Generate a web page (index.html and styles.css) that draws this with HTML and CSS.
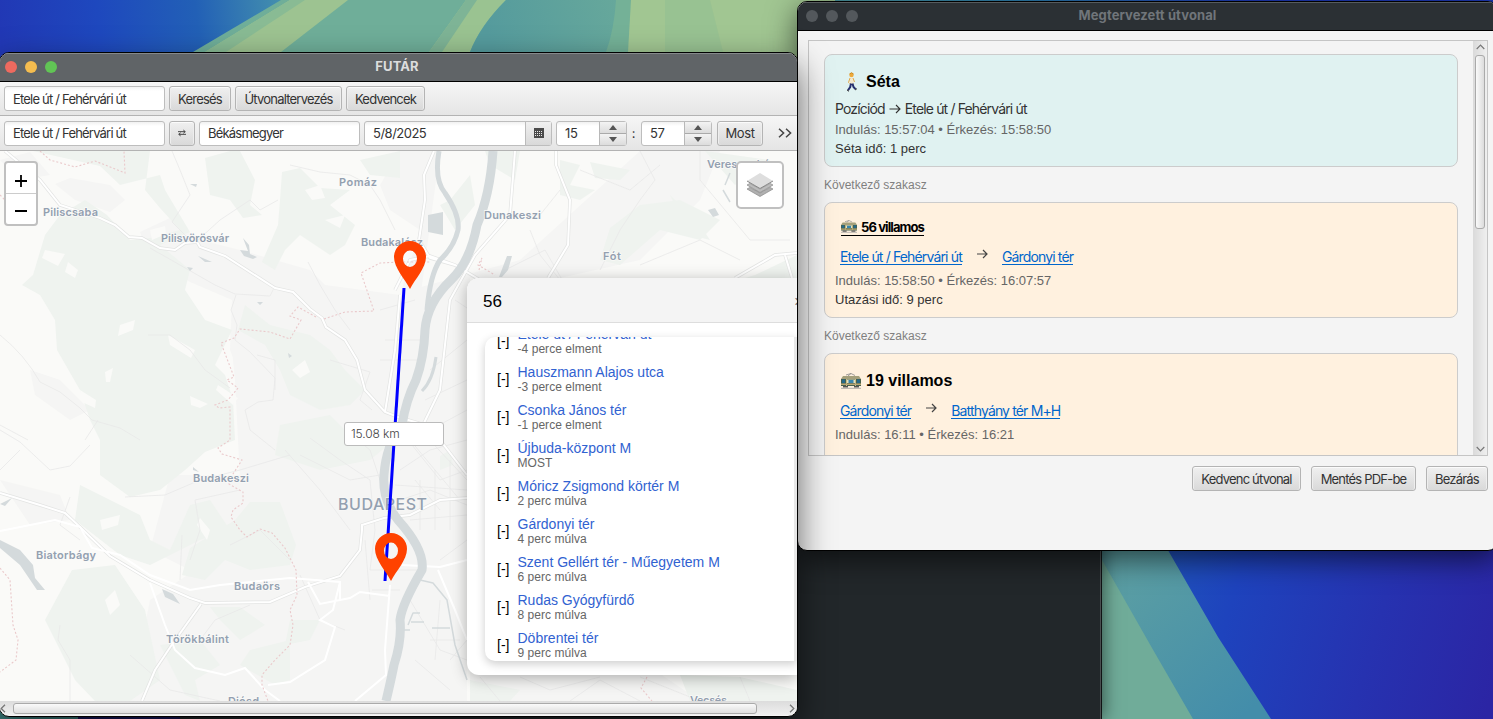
FILE: index.html
```html
<!DOCTYPE html>
<html lang="hu">
<head>
<meta charset="utf-8">
<title>FUTÁR</title>
<link rel="stylesheet" href="styles.css">
</head>
<body>
<div class="desktop">
  <svg class="wallpaper" viewBox="0 0 1493 719" width="1493" height="719">
    <defs>
      <linearGradient id="sky" x1="0" x2="280" y1="30" y2="0" gradientUnits="userSpaceOnUse"><stop offset="0" stop-color="#2138b5"/><stop offset=".35" stop-color="#1e48be"/><stop offset=".7" stop-color="#2260b6"/><stop offset="1" stop-color="#438fae"/></linearGradient>
      <linearGradient id="sea" x1="490" x2="630" y1="40" y2="0" gradientUnits="userSpaceOnUse"><stop offset="0" stop-color="#559b9d"/><stop offset="1" stop-color="#68a99b"/></linearGradient>
      <linearGradient id="deep" x1="1140" x2="1493" y1="590" y2="690" gradientUnits="userSpaceOnUse"><stop offset="0" stop-color="#2055bb"/><stop offset=".25" stop-color="#1e43bd"/><stop offset=".65" stop-color="#2632b0"/><stop offset="1" stop-color="#2b25a4"/></linearGradient>
      <linearGradient id="teal" x1="1110" x2="1240" y1="570" y2="719" gradientUnits="userSpaceOnUse"><stop offset="0" stop-color="#5c9fa3"/><stop offset="1" stop-color="#438daa"/></linearGradient>
      <linearGradient id="edge" x1="800" x2="1250" y1="0" y2="0" gradientUnits="userSpaceOnUse"><stop offset="0" stop-color="#519c9e"/><stop offset=".5" stop-color="#2c7dad"/><stop offset="1" stop-color="#1d39b6"/></linearGradient>
    </defs>
    <rect width="800" height="60" fill="url(#sky)"/>
    <path d="M193 52L281 0H800V60H180Z" fill="#6fae99"/>
    <path d="M205 52L290 0H348L281 52Z" fill="#9dc391"/>
    <path d="M205 52L290 0H305L226 52Z" fill="#89bb94"/>
    <path d="M429 52L466 0H506Q480 26 470 52Z" fill="#9ac391"/>
    <path d="M429 52L466 0H477L442 52Z" fill="#7eb496"/>
    <path d="M470 52Q480 26 506 0H640V52Z" fill="url(#sea)"/>
    <path d="M606 52Q614 30 616 0H634V52Z" fill="#74b197"/>
    <path d="M628 52L631 0H836V60H628Z" fill="#a1c692"/>
    <path d="M665 52V0H710L723 52Z" fill="#8fbe92" opacity=".5"/>
    <rect x="835" width="658" height="3" fill="url(#edge)"/>
    <rect x="1102" y="545" width="391" height="174" fill="url(#deep)"/>
    <path d="M1102 545H1165L1218 637L1271 719H1102Z" fill="url(#teal)"/>
    <path d="M1102 560L1152 648L1193 719H1102Z" fill="#70ac99"/>
    <rect y="700" width="78" height="19" fill="#3e8584"/>
    <rect x="78" y="700" width="102" height="19" fill="#171562"/>
  </svg>

  <div class="terminal"></div>

  <section class="window main-window">
    <header class="titlebar titlebar-active">
      <span class="light red"></span><span class="light amber"></span><span class="light green"></span>
      <h1 class="title">FUTÁR</h1>
    </header>
    <div class="toolbar">
      <div class="field">Etele út / Fehérvári út</div>
      <button class="btn w62">Keresés</button>
      <button class="btn w107">Útvonaltervezés</button>
      <button class="btn w79">Kedvencek</button>
    </div>
    <div class="toolbar toolbar-route">
      <div class="field">Etele út / Fehérvári út</div>
      <button class="btn swap"><svg width="8" height="8" viewBox="0 0 9 8"><path d="M0 2.500H8M6 .7L8.200 2.500L6 4.300M9 5.500H1M3 3.700L.8 5.500L3 7.300" fill="none" stroke="#444" stroke-width="1.100"/></svg></button>
      <div class="field">Békásmegyer</div>
      <div class="field date"><span>5/8/2025</span><span class="date-btn"><svg width="10" height="10" viewBox="0 0 10 10"><path d="M0 0H10V10H0Z" fill="#4a4a4a"/><path d="M1 3.500H9M1 5.500H9M1 7.500H9" stroke="#e8e8e8" stroke-width="1" stroke-dasharray="1 1"/></svg></span></div>
      <div class="spinner"><span>15</span><div class="steps"><i class="up"></i><i class="down"></i></div></div>
      <span class="colon">:</span>
      <div class="spinner"><span>57</span><div class="steps"><i class="up"></i><i class="down"></i></div></div>
      <button class="btn most">Most</button>
      <svg class="more" width="14" height="10" viewBox="0 0 14 10"><path d="M1 .8L5.600 5L1 9.200M8 .8L12.600 5L8 9.200" fill="none" stroke="#444" stroke-width="1.500"/></svg>
    </div>

    <div class="map">
      <svg class="tiles" viewBox="0 151 797 550" width="797" height="550">
        <rect y="151" width="797" height="550" fill="#fafaf8"/>
        <g fill="#f5f5f4">
          <path d="M55 184L75 200L110 212L125 200L110 185L70 178ZM140 232L170 218L200 240L240 250L310 270L325 285L400 295L420 230L390 210L380 185L400 151H440L420 300L410 430L360 440L250 400L230 350L232 300L190 282L150 258Z"/>
          <path d="M230 330L300 350L350 400L400 390L467 380V701H130L150 600L210 560L280 530L240 480L235 380Z"/>
          <path d="M410 290L520 260L640 151H720L700 200L640 260L560 278H470V520L400 500ZM30 370L60 380L90 410L70 420L35 395ZM120 320L170 300L180 330L140 340ZM0 160L30 152L50 175L20 180Z"/>
          <path d="M470 660H640L700 701H470ZM170 475L270 475L290 520L250 560L190 570L150 550ZM0 480L60 495L70 520L30 525Z"/>
        </g>
        <g fill="#eff3ef">
          <path d="M33 151H150L145 190L160 208L180 230L150 238L130 240L107 215L85 200L60 215L45 235L33 275L22 285L40 295L55 320L57 350L80 390L90 420L100 440V475L130 497L160 490L185 470L205 452L235 440L233 400L225 375L215 365L232 330L205 320L185 290L190 270L160 245L190 232L165 190L160 175L120 185L100 166Z"/>
          <path d="M205 158L230 151H240L255 180L250 205L262 215L243 218L230 200L210 195Z"/>
          <path d="M282 172L300 168L320 188L350 190L330 205L355 225L345 245L330 255L300 235L285 250L275 270L262 262L278 225L280 200Z"/>
          <path d="M360 160L400 151V178L370 175Z"/>
          <path d="M245 305L270 325L310 335L330 350L345 370L365 390L350 405L320 410L290 395L280 370L265 345L238 330Z"/>
          <path d="M280 425L330 415L350 435H400L370 460L320 470L275 455Z"/>
          <path d="M80 485L140 515L150 540L170 550L190 505L210 500L230 530L200 540L150 565L120 555L75 520Z"/>
          <path d="M190 548L235 520L250 502H280L296 545L290 565L250 570L225 560L205 580L182 575Z"/>
          <path d="M72 570L115 565L145 610L160 680L130 701H95L75 680L45 620Z"/>
          <path d="M160 645L200 640L220 665L195 680L200 701L185 695L175 675Z"/>
          <path d="M210 607H240L265 625L240 640L220 620ZM290 620H320L310 640L285 645ZM250 650L290 640V680L275 685L240 665Z"/>
          <path d="M485 151H520L515 180L490 165ZM560 160L580 165L570 185L595 190L580 200L560 195ZM610 228L640 205L680 200L720 220L700 240L660 230L620 265L600 260Z"/>
          <path d="M450 200L470 175L475 205L455 230L440 205ZM590 162L630 170L620 180L595 178ZM670 195L700 225L710 240L690 235ZM755 275L797 255V278H745ZM705 151L770 160L735 185Z"/>
          <path d="M440 456L450 450L453 465L440 470ZM470 680L520 690L510 701H470ZM680 675L740 677L797 690V701H690Z"/>
        </g>
        <g fill="#fafaf8">
          <path d="M68 262L78 270L75 278L65 272ZM45 250L65 254L58 266L42 258ZM120 325L135 320L133 330L118 336ZM105 372L113 368L110 382L106 382ZM80 390L96 400L95 408L82 402ZM218 385L238 398L233 405L216 390ZM168 335L195 350L191 358L170 345ZM190 396L208 404L200 408L191 405ZM150 230L165 226L166 234L152 240Z"/>
          <path d="M292 370L305 360L310 372L300 378ZM305 190L320 185L325 198L312 200ZM325 220L345 215L340 228ZM100 520L120 515L118 525L102 530ZM200 518L210 530L207 540L197 525ZM105 600L115 590L120 605L110 615Z"/>
        </g>
        <g fill="none" stroke="#e9e9e8" stroke-width=".8">
          <path d="M0 335Q25 355 40 382L60 392L80 408L92 420L120 428L140 440M172 151L180 170L190 195L172 222L190 240M0 425L28 440M85 440L98 420M290 165L320 172L350 175L370 185L380 200L395 230M278 200L260 210L250 200L220 220L198 240M150 248L180 265L215 285L235 294L270 296L275 286M236 295L231 310L237 325L235 340L250 352L275 378L273 400L258 402L245 410L250 430L275 450M257 355L275 360V390M308 262L320 285L335 310L350 330M148 335H170L190 350L205 370L230 388M330 360L370 372L360 400L372 410"/>
          <path d="M0 430L20 442L50 470L70 466L90 445M125 497L165 495L200 480L240 470L290 455M70 497L60 525L80 540M190 560L200 530L195 500L240 490M180 580L182 535M300 455L350 480L380 475M60 625L58 640L70 660V701M200 640L215 620L250 605M310 438L340 460L370 480L375 530L370 570M285 450L320 490L350 530M130 655L170 690L220 701M230 545L260 530L290 560M300 575L320 620L345 630"/>
          <path d="M640 151L655 180L640 200M580 170L630 190L660 165M600 270L620 230L640 200M505 270L545 250L568 290M455 300L500 330L540 278M700 151V180L750 240H790M560 280L540 255L530 230M640 265L700 240L740 260M495 215L540 215L560 190M380 310L415 300M385 340H425M380 360H420M430 370L467 340M425 400L467 380M430 430L467 410"/>
          <path d="M400 470L430 450L467 440M395 485L467 490M400 500L430 490L467 505M410 520L467 515M370 570H420M372 590H400M365 540L370 600M420 480V530M435 470V530M450 460V530M410 600L440 650L467 660M430 640H460M440 600L435 660M415 660L450 690M400 430L440 480L467 470M345 430L370 450L380 480M410 440L460 500M425 435L467 480M415 480L440 510"/>
          <path d="M480 677L500 701M520 677L550 690L600 677M570 701L600 680L640 701M640 677L700 701M740 677L750 701M440 560L467 540M450 660L467 640M0 470L20 450"/>
        </g>
        <g fill="none" stroke="#e3e4e3" stroke-width="3.400">
          <path id="r1" d="M5 151L40 180L60 205L100 218L115 225L129 237L142 238L160 248L175 250L185 243L197 242L200 247L225 256L275 288L293 292L310 309L322 318L326 327L345 340L357 360L365 390L385 412L398 417L425 425L440 440L467 475"/>
          <path id="r2" d="M0 493L40 505L65 513L80 527L110 556L150 580L190 598L205 603L270 602L305 587L340 576L360 550L362 530L362 525L384 518L410 515L440 500L467 498"/>
          <path id="r3" d="M201 604L171 646L155 670L142 701"/>
          <path id="r4" d="M434 151L424 175L425 200L419 240L430 258L455 265L480 280M400 295L395 350L385 412M455 265L430 256L410 260L395 290"/>
          <path id="r5" d="M556 151V165L570 200L568 245L548 278M515 151L510 215L475 255L450 300L440 390L423 425M797 253L775 255L735 278M785 255L792 278"/>
        </g>
        <g fill="none" stroke="#fff" stroke-width="2">
          <use href="#r1"/><use href="#r2"/><use href="#r3"/><use href="#r4"/><use href="#r5"/>
          <path d="M0 531L55 520L80 527L92 548L120 555L150 575L190 590L220 585L290 578L340 582L340 600M150 583L165 625L175 650L195 668L225 675L245 668L265 690L280 701M308 582L320 604L350 598L360 592L390 596M390 585L385 650L386 675L355 701M340 582L333 610L320 620L335 627L325 660L290 682L268 685M402 565L440 567L467 560M438 570L455 610L467 640"/>
        </g>
        <g fill="#d4dadc">
          <path d="M428 215L443 212V235L428 232ZM507 256L512 256L508 270L502 277H499ZM708 210L715 208L719 215L713 217ZM190 184L197 184L196 187ZM243 238L249 245L250 254L257 257L253 259L244 256L240 250L248 251ZM198 256L212 262H205ZM187 267L193 268L190 271ZM257 302L263 302L260 305ZM0 540L20 550L33 565L35 578L45 590H37L20 565L0 548ZM162 589L173 594L180 604L165 597ZM288 353L292 356L289 358ZM0 504L12 498L5 506ZM193 467L199 472L193 470Z"/>
        </g>
        <g fill="none" stroke="#d4dadc" stroke-linejoin="round">
          <path stroke-width="9" d="M493 151Q490 195 477 225Q470 262 451 280Q427 303 425 330Q424 358 416 380Q406 400 402 425Q386 445 384 475Q382 500 398 520Q425 550 422 570Q402 604 400 620Q402 640 394 665Q391 680 386 701"/>
          <path stroke-width="5" d="M439 151Q434 180 445 193Q460 215 458 230Q454 247 440 260Q430 275 427 310"/>
          <path stroke-width="3" d="M436 357Q433 380 422 391M395 425Q389 450 385 460"/>
          <path stroke-width="1.500" d="M420 580L433 583L447 600L455 645L467 680M408 625L413 613H420M411 622H424M404 630H410M432 628H450M730 173L725 185M723 190L730 202"/>
        </g>
        <g fill="none" stroke="#eac9cb" stroke-width="1.100" stroke-dasharray="2 2">
          <path d="M40 151L50 160L75 167L95 161L125 173L124 151M0 195L5 200M324 319L345 312L374 311L361 273L380 263L400 262H430M316 317L298 307L290 316L301 320L290 339L270 332L240 329L234 338L221 343L234 377L227 380L238 388L228 400L215 405L219 408L230 407V440L218 448L222 454L242 460L233 474L229 484L243 492V503L233 510L231 517L240 530L247 537L260 529L272 533L285 548L296 570L297 595L290 610L293 625L290 645L275 660L262 675V685L268 701M0 568L10 580L13 625L18 640L16 660L0 672M479 270L482 258L478 265L495 275M647 677L641 688L652 701"/>
        </g>
        <g class="place">
          <text x="339" y="186" textLength="38">Pomáz</text>
          <text x="43" y="216" textLength="55">Piliscsaba</text>
          <text x="161" y="242" textLength="68">Pilisvörösvár</text>
          <text x="361" y="246" textLength="62">Budakalász</text>
          <text x="484" y="219" textLength="57">Dunakeszi</text>
          <text x="603" y="260" textLength="18">Fót</text>
          <text x="707" y="168" textLength="69">Veresegyház</text>
          <text x="193" y="482" textLength="56">Budakeszi</text>
          <text x="36" y="559" textLength="60">Biatorbágy</text>
          <text x="234" y="590" textLength="46">Budaörs</text>
          <text x="166" y="643" textLength="63">Törökbálint</text>
          <text x="228" y="705" textLength="31">Diósd</text>
          <text x="690" y="704" textLength="37">Vecsés</text>
          <text class="capital" x="338" y="510" textLength="89">BUDAPEST</text>
        </g>
        <path d="M404 288L385 581" stroke="#00f" stroke-width="3" fill="none"/>
        <g fill="#ff4200" fill-rule="evenodd">
          <path id="pin" d="M410 289C405 279 394 268 394 257A16 16 0 0 1 426 257C426 268 415 279 410 289ZM410 250.500A7 8.200 0 1 0 410 266.900A7 8.200 0 1 0 410 250.500Z"/>
          <use href="#pin" x="-19" y="292"/>
        </g>
      </svg>
      <div class="zoom-control"><div class="zoom-in"><svg width="12" height="12"><path d="M0 6H12M6 0V12" stroke="#000" stroke-width="1.800"/></svg></div><div><svg width="12" height="12"><path d="M0 6H12" stroke="#000" stroke-width="1.800"/></svg></div></div>
      <div class="layers"><svg width="28" height="26" viewBox="0 0 28 26"><path d="M1 17L14 24.500L27 17L24 15.400L14 21L4 15.400Z" fill="#b0b0b0" stroke="#888" stroke-width=".7"/><path d="M1 13L14 20.500L27 13L24 11.400L14 17L4 11.400Z" fill="#bcbcbc" stroke="#888" stroke-width=".7"/><path d="M1 9L14 1L27 9L14 16.500Z" fill="#dedede"/><path d="M1 9L14 16.500L27 9" fill="none" stroke="#888"/></svg></div>
      <div class="distance">15.08 km</div>
      <div class="popup">
        <div class="popup-head"><span>56</span><span class="close">×</span></div>
        <div class="stops">
          <div class="stop"><b>[-]</b><div><a>Etele út / Fehérvári út</a><small>-4 perce elment</small></div></div>
          <div class="stop"><b>[-]</b><div><a>Hauszmann Alajos utca</a><small>-3 perce elment</small></div></div>
          <div class="stop"><b>[-]</b><div><a>Csonka János tér</a><small>-1 perce elment</small></div></div>
          <div class="stop"><b>[-]</b><div><a>Újbuda-központ M</a><small>MOST</small></div></div>
          <div class="stop"><b>[-]</b><div><a>Móricz Zsigmond körtér M</a><small>2 perc múlva</small></div></div>
          <div class="stop"><b>[-]</b><div><a>Gárdonyi tér</a><small>4 perc múlva</small></div></div>
          <div class="stop"><b>[-]</b><div><a>Szent Gellért tér - Műegyetem M</a><small>6 perc múlva</small></div></div>
          <div class="stop"><b>[-]</b><div><a>Rudas Gyógyfürdő</a><small>8 perc múlva</small></div></div>
          <div class="stop"><b>[-]</b><div><a>Döbrentei tér</a><small>9 perc múlva</small></div></div>
        </div>
      </div>
    </div>
    <div class="hscroll">
      <svg width="6" height="9" viewBox="0 0 6 9"><path d="M5 .7L1.200 4.500L5 8.300" fill="none" stroke="#777" stroke-width="1.300"/></svg>
      <div class="hthumb"></div>
      <svg width="6" height="9" viewBox="0 0 6 9"><path d="M1 .7L4.800 4.500L1 8.300" fill="none" stroke="#777" stroke-width="1.300"/></svg>
    </div>
  </section>

  <section class="window dialog">
    <header class="titlebar titlebar-idle">
      <span class="light"></span><span class="light"></span><span class="light"></span>
      <h2 class="title">Megtervezett útvonal</h2>
    </header>
    <div class="pane">
      <div class="legs">
        <article class="leg walk">
          <h3 class="leg-title indent"><svg width="12" height="20" viewBox="0 0 12 20"><circle cx="5.500" cy="3" r="2.200" fill="#eda93b"/><path d="M3.500 2Q5.500-.5 7.500 2" fill="none" stroke="#c98a20"/><path d="M4 5.500H7L7.800 12H3.500Z" fill="#f4e9cf"/><path d="M4 6L2.500 10.500L3.500 11.500M7 6L8.500 10" fill="none" stroke="#e3a94a"/><path d="M5 11.500L4.200 15L2 18.200M6.500 11.500L7.500 15L9.500 17.200" fill="none" stroke="#27306f" stroke-width="2"/><path d="M1 18L3 19.300M9 18L11 16.600" stroke="#333" stroke-width="1"/></svg>Séta</h3>
          <p class="summary">Pozíciód <svg width="12" height="10" viewBox="0 0 12 10"><path d="M.5 5H11M7 1L11 5L7 9" fill="none" stroke="#333" stroke-width="1.100"/></svg> Etele út / Fehérvári út</p>
          <p class="times">Indulás: 15:57:04 • Érkezés: 15:58:50</p>
          <p class="duration">Séta idő: 1 perc</p>
        </article>
        <p class="next">Következő szakasz</p>
        <article class="leg tram">
          <h3 class="leg-title small"><span><svg width="16" height="13" viewBox="0 0 20 16"><use href="#tram"/></svg> 56 villamos</span></h3>
          <p class="route"><a>Etele út / Fehérvári út</a><svg width="12" height="10" viewBox="0 0 12 10"><path d="M1 5H11M7 1L11 5L7 9" fill="none" stroke="#444" stroke-width="1.200"/></svg><a>Gárdonyi tér</a></p>
          <p class="times">Indulás: 15:58:50 • Érkezés: 16:07:57</p>
          <p class="duration">Utazási idő: 9 perc</p>
        </article>
        <p class="next">Következő szakasz</p>
        <article class="leg tram last">
          <h3 class="leg-title"><svg width="20" height="16" viewBox="0 0 20 16"><g id="tram"><path d="M5 2L10 .5L14 2.500M10 .5L7 3" fill="none" stroke="#888" stroke-width=".8"/><path d="M2 3H18L20 6H0Z" fill="#a5a07b"/><path d="M0 6H20V13H0Z" fill="#47614e"/><path d="M1 6.500H4V10H1ZM16 6.500H19V10H16Z" fill="#25698a"/><path d="M6 6.500H14V10H6Z" fill="#e8e2bd"/><path d="M7.500 7H12.500V10H7.500Z" fill="#3a86ad"/><path d="M5 6H6V13H5ZM14 6H15V13H14Z" fill="#c9bf8c"/><path d="M0 10.500H20V12H0Z" fill="#b9a775"/><path d="M2 13H7V14.500H2ZM13 13H18V14.500H13Z" fill="#555"/><path d="M0 15.300H20" stroke="#999" stroke-width=".8"/></g></svg>19 villamos</h3>
          <p class="route"><a>Gárdonyi tér</a><svg width="12" height="10" viewBox="0 0 12 10"><path d="M1 5H11M7 1L11 5L7 9" fill="none" stroke="#444" stroke-width="1.200"/></svg><a>Batthyány tér M+H</a></p>
          <p class="times">Indulás: 16:11 • Érkezés: 16:21</p>
        </article>
      </div>
      <div class="vscroll">
        <svg width="9" height="6" viewBox="0 0 9 6"><path d="M.7 5L4.500 1.200L8.300 5" fill="none" stroke="#777" stroke-width="1.200"/></svg>
        <div class="vthumb"></div>
        <svg class="vdown" width="9" height="6" viewBox="0 0 9 6"><path d="M.7 1L4.500 4.800L8.300 1" fill="none" stroke="#777" stroke-width="1.200"/></svg>
      </div>
    </div>
    <footer class="actions">
      <button class="btn w109">Kedvenc útvonal</button>
      <button class="btn w105">Mentés PDF-be</button>
      <button class="btn w62">Bezárás</button>
    </footer>
  </section>
</div>
</body>
</html>
```
FILE: styles.css
```css
* { box-sizing: border-box; }
body { margin: 0; overflow: hidden; }
h1, h2, h3, p { margin: 0; }
svg { display: block; flex: none; }

.desktop {
  position: relative;
  width: 1493px;
  height: 719px;
  overflow: hidden;
  background: #22272a;
  font: 13px/16px Inter, "Liberation Sans", sans-serif;
  color: #333;
}
.wallpaper { position: absolute; left: 0; top: 0; }
.terminal {
  position: absolute;
  left: 180px;
  top: 540px;
  width: 922px;
  height: 179px;
  background: #22272a;
  border-right: 1px solid #101314;
  box-shadow: inset -1px 0 #4a4e50, 2px 0 16px rgba(0, 0, 0, .5);
}

.window { position: absolute; display: flex; flex-direction: column; overflow: hidden; }
.main-window {
  z-index: 2;
  left: -1px;
  top: 52px;
  width: 799px;
  height: 665px;
  border: 1px solid #000;
  border-radius: 10px;
  background: #f4f4f4;
  box-shadow: 0 14px 34px rgba(0, 0, 0, .6);
}

.titlebar { position: relative; display: flex; align-items: center; height: 29px; flex: none; gap: 8px; padding-left: 5px; border-bottom: 1px solid #000; }
.titlebar-active { background: #606467; box-shadow: inset 0 1px #85898b; }
.titlebar-idle { background: #2b3034; padding-left: 8px; box-shadow: inset 0 1px #565b5e; }
.light { width: 12px; height: 12px; border-radius: 50%; background: #53585c; }
.red { background: #ee6a5f; }
.amber { background: #f5bd4f; }
.green { background: #61c455; }
.title { position: absolute; left: 0; right: 3px; top: 5px; text-align: center; font-size: 13px; line-height: 17px; font-weight: 700; color: #dcdddd; letter-spacing: .1px; }
.titlebar-idle .title { right: 0; color: #70757a; letter-spacing: .1px; }

.toolbar {
  display: flex;
  align-items: center;
  gap: 4px;
  height: 34px;
  flex: none;
  padding: 0 4px;
  background: linear-gradient(#f6f6f6, #e5e5e5);
  border-bottom: 1px solid #b3b3b3;
}
.toolbar-route { height: 35px; }
.field, .spinner {
  display: flex;
  align-items: center;
  flex: none;
  width: 161px;
  height: 25px;
  padding-left: 8px;
  border: 1px solid #bdbdbd;
  border-radius: 3px;
  background: linear-gradient(#f1f1f1, #fff 4px);
  letter-spacing: -.8px;
  white-space: pre;
}
.btn {
  display: flex;
  align-items: center;
  justify-content: center;
  flex: none;
  height: 25px;
  padding: 0;
  border: 1px solid #b4b4b4;
  border-radius: 3px;
  background: linear-gradient(#f0f0f0, #d9d9d9);
  box-shadow: inset 0 1px #fbfbfb, inset 1px 0 #eee, inset -1px 0 #eee;
  font: 13px/16px Inter, sans-serif;
  letter-spacing: -.8px;
  color: #333;
  white-space: nowrap;
}
.w62 { width: 62px; }
.w107 { width: 107px; }
.w79 { width: 79px; }
.w109 { width: 109px; }
.w105 { width: 105px; }
.swap { width: 26px; }
.date { width: 188px; justify-content: space-between; letter-spacing: -.5px; }
.date-btn { display: flex; align-items: center; justify-content: center; width: 26px; height: 23px; border-left: 1px solid #bbb; background: linear-gradient(#f0f0f0, #d9d9d9); }
.spinner { width: 71px; justify-content: space-between; letter-spacing: -.4px; }
.steps { width: 27px; height: 23px; display: flex; flex-direction: column; border-left: 1px solid #b8b8b8; }
.steps i { flex: 1; display: flex; align-items: center; justify-content: center; background: linear-gradient(#f3f3f3, #dcdcdc); }
.steps .up { border-bottom: 1px solid #aaa; }
.steps i::after { content: ""; border: 4.500px solid transparent; }
.steps .up::after { border-bottom: 5px solid #555; border-top: 0; }
.steps .down::after { border-top: 5px solid #555; border-bottom: 0; }
.colon { width: 5px; margin: 0 1px 0 0; text-align: center; }
.most { width: 46px; margin-left: 1px; letter-spacing: -.4px; }
.more { margin-left: 11px; }

.map { position: relative; height: 550px; flex: none; overflow: hidden; }
.place { font: 600 11px Inter, sans-serif; fill: #93a0b0; paint-order: stroke; stroke: #fafaf8; stroke-width: 1.500px; }
.capital { font-size: 16px; font-weight: 500; stroke-width: 1px; }
.zoom-control, .layers, .distance, .popup { position: absolute; }
.zoom-control { left: 4px; top: 10px; width: 34px; height: 65px; border: 2px solid #c0c0c0; border-radius: 4px; background: #fff; }
.zoom-control div { height: 31px; display: flex; align-items: center; justify-content: center; }
.zoom-control .zoom-in { height: 31px; padding-top: 5px; border-bottom: 1px solid #ccc; }
.zoom-control .zoom-in + div { padding-top: 3px; }
.layers { left: 736px; top: 10px; width: 48px; height: 48px; display: flex; align-items: center; justify-content: center; border: 2px solid #c0c0c0; border-radius: 5px; background: #fff; }
.distance { left: 344px; top: 271px; width: 100px; height: 24px; padding: 3px 6px; border: 1px solid #bbb; border-radius: 3px; background: #fff; font-size: 12px; font-weight: 300; color: #444; letter-spacing: -.1px; }
.popup { left: 467px; top: 127px; width: 330px; height: 397px; border-radius: 12px 0 0 12px; background: #fff; box-shadow: 0 3px 16px rgba(0, 0, 0, .3); font-family: "Liberation Sans", sans-serif; overflow: visible; }
.popup-head { display: flex; justify-content: space-between; align-items: center; height: 45px; padding: 3px 0 0 16px; border-radius: 12px 0 0; border-bottom: 1px solid #ddd; background: #f4f4f4; font-size: 17px; color: #000; }
.close { width: 3px; overflow: hidden; color: #777; }
.stops { margin: 14px 0 0 18px; height: 324px; overflow: hidden; border-radius: 10px 0 0 10px; background: #fff; border-right: 3px solid #e8e8e8; box-shadow: 0 3px 10px rgba(0, 0, 0, .2); }
.stop { display: flex; gap: 8.500px; height: 38px; padding: 5px 0 0 12px; }
.stop:first-child { margin-top: -16px; }
.stop b { width: 12px; padding-top: 7px; font-weight: 400; font-size: 14px; color: #000; white-space: nowrap; }
.stop a { display: block; font-size: 14px; line-height: 16px; color: #3162d1; white-space: nowrap; }
.stop small { display: block; font-size: 12px; line-height: 14px; color: #666; letter-spacing: .05px; }
.hscroll { display: flex; align-items: center; justify-content: space-between; height: 14px; padding: 0 2px 0 0; flex: none; background: linear-gradient(#dcdcdc, #efefef); }
.hthumb { width: 744px; height: 11px; margin-right: auto; margin-left: 7px; border: 1px solid #aaa; border-radius: 3px; background: linear-gradient(#fafafa, #dedede); }

.dialog { left: 797px; top: 1px; width: 701px; height: 550px; border: 1px solid #000; border-radius: 10px; background: #f4f4f4; box-shadow: 0 8px 30px rgba(0, 0, 0, .6); }
.pane { display: flex; justify-content: space-between; width: 680px; height: 416px; margin: 9px 0 0 10px; border: 1px solid #c5c5c5; overflow: hidden; flex: none; }
.legs { width: 649px; padding: 13px 0 0 15px; }
.leg { width: 634px; padding: 0 10px; border: 1px solid #ccc; border-radius: 8px; }
.walk { height: 113px; background: #e0f2f1; }
.tram { height: 116px; background: #fff1df; }
.last { height: 150px; }
.leg-title { display: flex; align-items: center; gap: 5px; padding-left: 6px; height: 26px; margin-top: 14px; font: 700 16px/26px "Liberation Sans", sans-serif; color: #000; }
.indent { padding-left: 11px; gap: 8px; }
.small { font: 700 13px/16px Inter, sans-serif; letter-spacing: -.9px; height: 16px; margin-top: 17px; }
.small span { display: flex; gap: 4px; border-bottom: 1px solid #000; line-height: 15px; white-space: nowrap; }
.summary { display: flex; align-items: center; gap: 4px; height: 20px; margin-top: 4px; font-size: 14px; letter-spacing: -.85px; }
.times, .duration, .next { font-family: "Liberation Sans", sans-serif; white-space: nowrap; }
.times { font-size: 13px; line-height: 19px; margin-top: 1px; color: #666; letter-spacing: 0; }
.duration { font-size: 13px; line-height: 19px; color: #333; }
.next { height: 35px; font-size: 12px; line-height: 36px; color: #808080; }
.route { display: flex; align-items: flex-start; gap: 14px; height: 20px; margin-top: 12px; padding-left: 5px; font-size: 14px; line-height: 18px; letter-spacing: -.85px; color: #0066cc; }
.route a { border-bottom: 1px solid #0066cc; height: 17px; white-space: nowrap; }
.route svg { margin-top: 1px; }
.tram .times { margin-top: 3px; }
.last .route { margin-top: 8px; }
.vscroll { width: 14px; display: flex; flex-direction: column; align-items: center; background: linear-gradient(90deg, #dadada, #efefef); padding-top: 3px; }
.vthumb { width: 10px; height: 174px; margin-top: 5px; border: 1px solid #aaa; border-radius: 3px; background: linear-gradient(90deg, #fafafa, #dcdcdc); }
.vdown { margin-top: auto; margin-bottom: 3px; }
.actions { display: flex; justify-content: flex-end; gap: 10px; margin-top: 10px; padding-right: 9px; }
```
